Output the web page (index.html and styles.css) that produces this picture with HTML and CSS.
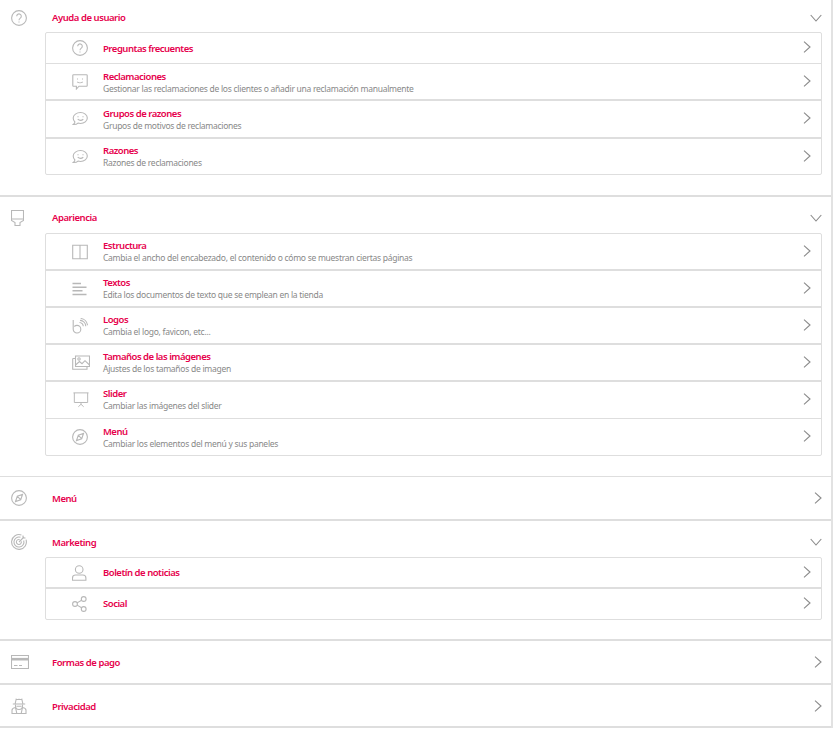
FILE: index.html
```html
<!DOCTYPE html>
<html lang="es">
<head>
<meta charset="utf-8">
<title>Configuración</title>
<link rel="stylesheet" href="styles.css">
</head>
<body>
<svg class="defs" width="0" height="0" aria-hidden="true">
  <symbol id="i-help" viewBox="0 0 16 16"><circle cx="8" cy="8" r="7.400"/><path d="M5.700 6.200a2.300 2.300 0 1 1 3.600 1.900c-.9.600-1.300 1-1.300 2.100"/><path d="M8 11.400v1.200"/></symbol>
  <symbol id="i-claim" viewBox="0 0 16 16"><path d="M1.500.8h13a.7.7 0 0 1 .7.7v10a.7.7 0 0 1-.7.7H7l-2.600 2.800v-2.800H1.500a.7.7 0 0 1-.7-.7v-10a.7.7 0 0 1 .7-.7z"/><path d="M5.500 4.400v1M10.500 4.400v1M5.200 7.800c1.500 1.300 4.100 1.300 5.600 0"/></symbol>
  <symbol id="i-chat" viewBox="0 0 16 16"><path d="M8.500 1.500c3.700 0 6.800 2.400 6.800 5.500s-3.100 5.500-6.800 5.500c-.9 0-1.700-.1-2.500-.4-1 1-3 1.500-4.700 1.400.8-.6 1.500-1.400 1.600-2.500C1.900 10 1.200 8.600 1.200 7c0-3.100 3.500-5.500 7.300-5.500z"/><path d="M6 5.200v1M11 5.200v1M5.700 8.200c1.500 1.300 4 1.300 5.600 0"/></symbol>
  <symbol id="i-brush" viewBox="0 0 13 16"><path d="M.5.500h12v8.500H.5zM.5 9v1.500L4 12.500v3h5v-3l3.500-2V9"/></symbol>
  <symbol id="i-layout" viewBox="0 0 16 16"><path d="M.7 1.200h14.600v13.600H.7zM8 1.200v13.600"/></symbol>
  <symbol id="i-text" viewBox="0 0 16 16"><path class="bold" d="M.5 2.500h8.500M.5 6.200h14M.5 9.800h10M.5 13.500h14"/></symbol>
  <symbol id="i-logo" viewBox="0 0 16 16"><path d="M1.200 2v9.200a3.800 3.800 0 1 0 3.800-3.800c-1 0-2 .4-2.700 1.100"/><path d="M7.500 4.500c2 .2 3.600 1.800 3.800 3.800M8 2.400c3.200.2 5.600 2.700 5.800 5.800M8.700.5c3.600.3 6.400 3.100 6.800 6.700"/></symbol>
  <symbol id="i-images" viewBox="0 0 18 16"><path d="M3.500 1h14v10.500h-14zM.7 3.500h2.800M.7 3.500v10.800h14.300v-2.800M.7 14.300h14.300"/><path d="M3.500 10l4-3.500 2.500 2.200 3-3 4.500 4.300"/><circle cx="7" cy="4" r="1.200"/></symbol>
  <symbol id="i-slide" viewBox="0 0 18 18"><path d="M.5 1h17M1.500 1v10.800h15V1M9 11.800v2M9 13.800l-3 2.800M9 13.800l3 2.800"/></symbol>
  <symbol id="i-compass" viewBox="0 0 16 16"><circle cx="8" cy="8" r="7.400"/><path d="M11.500 4.500 9.700 9.700 4.500 11.500 6.300 6.300zM6.300 6.300l3.400 3.400"/></symbol>
  <symbol id="i-target" viewBox="0 0 16 16"><path d="M15 5.600A7.400 7.400 0 1 1 10.400 1"/><path d="M12.700 6.500A5 5 0 1 1 9.500 3.300"/><path d="M10.300 7.400A2.500 2.500 0 1 1 8.600 5.600"/><path d="M8 8l5-5M12 1.500V4h2.500"/></symbol>
  <symbol id="i-user" viewBox="0 0 16 16"><circle cx="7.200" cy="4.500" r="3.800"/><path d="M.5 15.300v-2.300c0-1.800 1.500-3 3-3h7.400c1.500 0 3 1.200 3 3v2.300z"/></symbol>
  <symbol id="i-share" viewBox="0 0 16 16"><circle cx="3" cy="8" r="2.400"/><circle cx="11.700" cy="3" r="2.400"/><circle cx="11.700" cy="13" r="2.400"/><path d="M5.100 6.900l4.500-2.700M5.100 9.100l4.500 2.700"/></symbol>
  <symbol id="i-card" viewBox="0 0 18 14"><path d="M.5.500h17v13H.5z"/><path class="fat" d="M.5 4.200h17"/><path d="M3 10.500h3.500M8 10.500h3"/></symbol>
  <symbol id="i-spy" viewBox="0 0 16 16"><path d="M4.200 5.500 5.200 1.200c.8.500 1.700.5 2.800 0 1.100.5 2 .5 2.800 0l1 4.300M1.800 6h12.400"/><path d="M4.500 6.500v1.500a3.500 3.500 0 0 0 7 0V6.500M5.500 8.300h5"/><path d="M1 15.500v-3.300c0-1.500 2-2.400 3.500-2.700l1.300 6zM15 15.500v-3.300c0-1.500-2-2.400-3.500-2.700l-1.300 6zM5.800 15.500h4.400"/></symbol>
  <symbol id="i-right" viewBox="0 0 8 12"><path d="M1 .7 7 6l-6 5.300"/></symbol>
  <symbol id="i-down" viewBox="0 0 12 8"><path d="M.7 1 6 7l5.300-6"/></symbol>
</svg>

<main class="page">

  <section class="sec sec-help">
    <header class="sec-head">
      <svg class="sec-icon"><use href="#i-help"/></svg>
      <h2 class="sec-title">Ayuda de usuario</h2>
      <svg class="chev-down"><use href="#i-down"/></svg>
    </header>
    <ul class="list">
      <li class="row h31"><svg class="row-icon"><use href="#i-help"/></svg><div class="row-text"><h3 class="row-title">Preguntas frecuentes</h3></div><svg class="chev"><use href="#i-right"/></svg></li>
      <li class="row h37 thick"><svg class="row-icon"><use href="#i-claim"/></svg><div class="row-text"><h3 class="row-title">Reclamaciones</h3><p class="row-desc">Gestionar las reclamaciones de los clientes o añadir una reclamación manualmente</p></div><svg class="chev"><use href="#i-right"/></svg></li>
      <li class="row h38 thick"><svg class="row-icon"><use href="#i-chat"/></svg><div class="row-text"><h3 class="row-title">Grupos de razones</h3><p class="row-desc">Grupos de motivos de reclamaciones</p></div><svg class="chev"><use href="#i-right"/></svg></li>
      <li class="row h35"><svg class="row-icon"><use href="#i-chat"/></svg><div class="row-text"><h3 class="row-title">Razones</h3><p class="row-desc">Razones de reclamaciones</p></div><svg class="chev"><use href="#i-right"/></svg></li>
    </ul>
  </section>

  <section class="sec sec-look">
    <header class="sec-head">
      <svg class="sec-icon brush"><use href="#i-brush"/></svg>
      <h2 class="sec-title">Apariencia</h2>
      <svg class="chev-down"><use href="#i-down"/></svg>
    </header>
    <ul class="list">
      <li class="row h37 thick"><svg class="row-icon"><use href="#i-layout"/></svg><div class="row-text"><h3 class="row-title">Estructura</h3><p class="row-desc">Cambia el ancho del encabezado, el contenido o cómo se muestran ciertas páginas</p></div><svg class="chev"><use href="#i-right"/></svg></li>
      <li class="row h37 thick"><svg class="row-icon"><use href="#i-text"/></svg><div class="row-text"><h3 class="row-title">Textos</h3><p class="row-desc">Edita los documentos de texto que se emplean en la tienda</p></div><svg class="chev"><use href="#i-right"/></svg></li>
      <li class="row h37 thick"><svg class="row-icon"><use href="#i-logo"/></svg><div class="row-text"><h3 class="row-title">Logos</h3><p class="row-desc">Cambia el logo, favicon, etc...</p></div><svg class="chev"><use href="#i-right"/></svg></li>
      <li class="row h37 thick"><svg class="row-icon wide"><use href="#i-images"/></svg><div class="row-text"><h3 class="row-title">Tamaños de las imágenes</h3><p class="row-desc">Ajustes de los tamaños de imagen</p></div><svg class="chev"><use href="#i-right"/></svg></li>
      <li class="row h37"><svg class="row-icon wide"><use href="#i-slide"/></svg><div class="row-text"><h3 class="row-title">Slider</h3><p class="row-desc">Cambiar las imágenes del slider</p></div><svg class="chev"><use href="#i-right"/></svg></li>
      <li class="row h36"><svg class="row-icon"><use href="#i-compass"/></svg><div class="row-text"><h3 class="row-title">Menú</h3><p class="row-desc">Cambiar los elementos del menú y sus paneles</p></div><svg class="chev"><use href="#i-right"/></svg></li>
    </ul>
  </section>

  <section class="sec sec-bar">
    <header class="sec-head">
      <svg class="sec-icon"><use href="#i-compass"/></svg>
      <h2 class="sec-title">Menú</h2>
      <svg class="chev sec-chev"><use href="#i-right"/></svg>
    </header>
  </section>

  <section class="sec sec-market">
    <header class="sec-head">
      <svg class="sec-icon"><use href="#i-target"/></svg>
      <h2 class="sec-title">Marketing</h2>
      <svg class="chev-down"><use href="#i-down"/></svg>
    </header>
    <ul class="list">
      <li class="row h31 thick"><svg class="row-icon"><use href="#i-user"/></svg><div class="row-text"><h3 class="row-title">Boletín de noticias</h3></div><svg class="chev"><use href="#i-right"/></svg></li>
      <li class="row h30"><svg class="row-icon"><use href="#i-share"/></svg><div class="row-text"><h3 class="row-title">Social</h3></div><svg class="chev"><use href="#i-right"/></svg></li>
    </ul>
  </section>

  <section class="sec sec-bar">
    <header class="sec-head">
      <svg class="sec-icon card"><use href="#i-card"/></svg>
      <h2 class="sec-title">Formas de pago</h2>
      <svg class="chev sec-chev"><use href="#i-right"/></svg>
    </header>
  </section>

  <section class="sec sec-bar last">
    <header class="sec-head">
      <svg class="sec-icon"><use href="#i-spy"/></svg>
      <h2 class="sec-title">Privacidad</h2>
      <svg class="chev sec-chev"><use href="#i-right"/></svg>
    </header>
  </section>

</main>
</body>
</html>
```

FILE: styles.css
```css
* { box-sizing: border-box; }

html, body { margin: 0; padding: 0; background: #fff; }

body {
  font-family: "Noto Sans", "Open Sans", sans-serif;
  color: #888;
}

.defs { position: absolute; }

svg {
  fill: none;
  stroke: #b8b8b8;
  stroke-width: 1.1;
}

.fat { stroke-width: 2.6; }
.bold { stroke-width: 1.4; }

.page {
  width: 833px;
  border-right: 2px solid #e2e2e2;
}

.sec {
  border-bottom: 2px solid #dedede;
  padding-right: 9px;
}

.sec-help { height: 197px; }
.sec-look { height: 280px; border-bottom-width: 1px; }
.sec-bar { height: 44px; }
.sec-bar.last { height: 43px; }
.sec-market { height: 120px; }

.sec-head {
  display: flex;
  align-items: center;
  height: 32px;
  padding: 3px 0 0 11px;
}

.sec-bar .sec-head { height: 42px; padding-top: 0; }
.sec-look .sec-head { height: 36px; padding-top: 5px; }
.sec-market .sec-head { height: 36px; padding-top: 6px; }

.sec-icon {
  width: 16px;
  height: 16px;
  flex: none;
  margin-right: 25px;
}

.sec-icon.brush { width: 13px; margin-right: 28px; }
.sec-icon.card { width: 18px; height: 14px; margin-right: 23px; }

.sec-title {
  flex: 1;
  margin: 0;
  font-size: 9.5px;
  line-height: 14px;
  font-weight: 600;
  letter-spacing: -0.45px;
  color: #e6004c;
}

.sec-bar .sec-title,
.sec-market .sec-title { padding-top: 2px; }

.chev-down {
  width: 12px;
  height: 8px;
  flex: none;
  stroke: #8a8a8a;
}

.list {
  list-style: none;
  margin: 0 0 0 45px;
  padding: 0;
  border: 1px solid #dedede;
  border-radius: 2px;
}

.row {
  display: flex;
  align-items: center;
  padding: 0 10px 0 26px;
  border-bottom: 1px solid #dedede;
}

.row:last-child { border-bottom: 0; }
.row.thick { border-bottom-width: 2px; }

.h30 { height: 30px; }
.h31 { height: 31px; }
.h35 { height: 35px; }
.h36 { height: 36px; }
.h37 { height: 37px; }
.h38 { height: 38px; }

.row-icon {
  width: 16px;
  height: 16px;
  flex: none;
  margin-right: 15px;
}

.row-icon.wide { width: 18px; margin-right: 13px; }

.row-text { flex: 1; }

.sec-look .h37 .row-text,
.h35 .row-text,
.h30 .row-text { padding-bottom: 2px; }

.h38 .row-text { padding-bottom: 1px; }

.row-title {
  margin: 0;
  font-size: 9.5px;
  line-height: 13px;
  font-weight: 600;
  letter-spacing: -0.48px;
  color: #e6004c;
}

.row-desc {
  margin: 0;
  font-size: 8.5px;
  line-height: 11px;
  letter-spacing: -0.27px;
  color: #888;
}

.chev {
  width: 8px;
  height: 12px;
  flex: none;
  stroke: #8a8a8a;
}

.row .chev { margin-bottom: 2px; }
```
